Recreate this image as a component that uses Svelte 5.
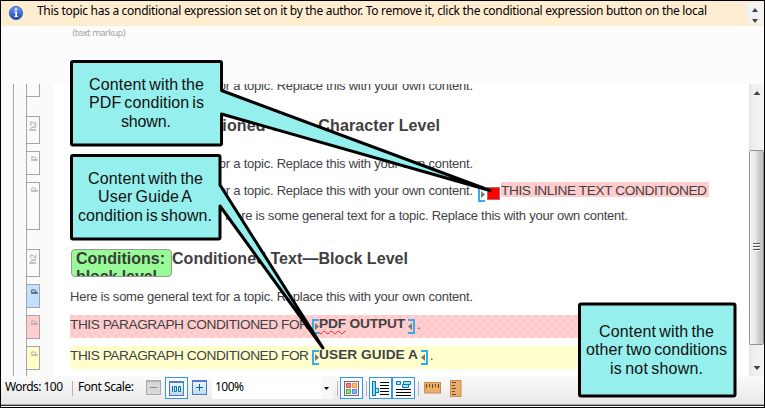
<script>
  const sentence = 'Here is some general text for a topic. Replace this with your own content.';

  // Spreads the letters of a run so that it occupies the given width.
  function fit(node, width) {
    const natural = node.getBoundingClientRect().width;
    const gaps = Math.max(1, node.textContent.length - 1);
    node.style.letterSpacing = `${(width - natural) / gaps}px`;
    node.style.width = `${width}px`;
  }

  const tags = [
    { label: '', height: 13, kind: 'first' },
    { label: 'h2', height: 28, kind: 'h' },
    { label: 'p', height: 24, kind: 'near' },
    { label: 'p', height: 48, kind: 'near' },
    { label: 'h2', height: 28, kind: 'far' },
    { label: 'p', height: 24, kind: 'near blue' },
    { label: 'p', height: 24, kind: 'near red' },
    { label: 'p', height: 24, kind: 'near yellow' }
  ];

  const callouts = [
    {
      path: 'M73 61.5H220Q221.500 61.5 221.500 63V90.500L490 190.500L221.500 114V143.500Q221.500 145 220 145H73Q71.500 145 71.500 143.500V63Q71.500 61.5 73 61.5Z',
      lines: [['Content with the', 89, 90, 115], ['PDF condition is', 89, 108, 115], ['shown.', 121, 127, 50]]
    },
    {
      path: 'M73 155.500H218.500Q220 155.500 220 157V185L323 348L220 206V237.500Q220 239 218.500 239H73Q71.500 239 71.500 237.500V157Q71.500 155.500 73 155.500Z',
      lines: [['Content with the', 88, 184, 115], ['User Guide A', 98, 202, 94], ['condition is shown.', 78, 221, 134]]
    },
    {
      path: 'M581 304H733.500Q735 304 735 305.500V394.500Q735 396 733.500 396H581Q579.500 396 579.500 394.500V305.500Q579.500 304 581 304Z',
      lines: [['Content with the', 599, 337, 115], ['other two conditions', 586, 355, 141], ['is not shown.', 610, 374, 93]]
    }
  ];
</script>

{#snippet bracket(side)}
  <svg class="bracket {side}" width="8" height="15" viewBox="0 0 8 15">
    <path d="M7 1H1V14H7" fill="none" stroke="#35adec" stroke-width="2" />
    <path d="M3 4L7 7.500L3 11Z" fill="#777" />
  </svg>
{/snippet}

<div class="window">
  <header class="notice">
    <svg class="info" width="16" height="16" viewBox="0 0 16 16">
      <defs>
        <linearGradient id="infoFill" x1="0" y1="0" x2="0" y2="1">
          <stop offset="0" stop-color="#6f9ae8" /><stop offset="1" stop-color="#1c43b4" />
        </linearGradient>
      </defs>
      <circle cx="8" cy="8" r="6.700" fill="url(#infoFill)" stroke="#3d62c4" stroke-width=".8" />
      <circle cx="8" cy="4.400" r="1.200" fill="#fff" />
      <path d="M6.300 6.500H9V11H10V12H6.300V11H7.300V7.500H6.300Z" fill="#fff" />
    </svg>
    <span class="ui notice-text" use:fit={670}>This topic has a conditional expression set on it by the author. To remove it, click the conditional expression button on the local</span>
    <svg class="spinner" width="16" height="21" viewBox="0 0 16 21">
      <rect width="16" height="21" fill="#f3f3f3" />
      <path d="M5 9L8 5L11 9Z M5 16L8 20L11 16Z" fill="#444" />
    </svg>
  </header>

  <div class="markup"><span use:fit={54}>(text markup)</span></div>

  <main class="editor">
    <aside class="gutter">
      <div class="structure">
        {#each tags as tag}
          <div class="tag {tag.kind}" style:height="{tag.height}px"><span>{tag.label}</span></div>
        {/each}
      </div>
    </aside>

    <section class="doc">
      <p class="row cut"><span use:fit={403}>{sentence}</span></p>
      <h2 class="character"><span use:fit={269}>Conditioned Text—Character Level</span></h2>
      <p class="row gap18"><span use:fit={403}>{sentence}</span></p>
      <p class="row gap7">
        <span use:fit={403}>{sentence}</span>
        <span class="inline-mark">{@render bracket('open')}<i class="swatch"></i></span>
        <span class="pink"><span class="caps" use:fit={206}>THIS INLINE TEXT CONDITIONED</span></span>
      </p>
      <p class="row gap5 list-item"><span use:fit={403}>{sentence}</span></p>
      <div class="block-heading">
        <div class="badge"><span use:fit={89}>Conditions:</span><span use:fit={81}>block level</span></div>
        <h2><span use:fit={236}>Conditioned Text—Block Level</span></h2>
      </div>
      <p class="row gap10"><span use:fit={403}>{sentence}</span></p>
      <div class="band redband">
        <span class="caps" use:fit={239}>THIS PARAGRAPH CONDITIONED FOR</span>
        {@render bracket('open')}
        <b class="strong" use:fit={86}><u>PDF</u> OUTPUT</b>
        {@render bracket('close')}
        <span class="dot">.</span>
      </div>
      <div class="band yellowband">
        <span class="caps" use:fit={239}>THIS PARAGRAPH CONDITIONED FOR</span>
        {@render bracket('open')}
        <b class="strong" use:fit={99}>USER GUIDE A</b>
        {@render bracket('close')}
        <span class="dot">.</span>
      </div>
    </section>

    <svg class="scroll" width="15" height="292" viewBox="0 0 15 292">
      <defs>
        <linearGradient id="thumb"><stop offset="0" stop-color="#f6f6f6" /><stop offset=".45" stop-color="#e6e6e8" /><stop offset=".6" stop-color="#d2d2d5" /><stop offset="1" stop-color="#bcbcc0" /></linearGradient>
        <linearGradient id="track"><stop offset="0" stop-color="#e4e4e4" /><stop offset=".3" stop-color="#f0f0f0" /><stop offset="1" stop-color="#f3f3f3" /></linearGradient>
      </defs>
      <rect width="15" height="292" fill="url(#track)" />
      <path d="M4.500 11L8 7L11.500 11Z M4.500 282L8 286L11.500 282Z" fill="#444" />
      <rect x=".5" y="66.500" width="14" height="194" rx="1" fill="url(#thumb)" stroke="#929295" />
      <path d="M4 159.500H11M4 162.500H11M4 165.500H11" stroke="#555" />
      <path d="M4 160.500H11M4 163.500H11M4 166.500H11" stroke="#fff" />
    </svg>
  </main>

  <footer class="status">
    <span class="ui words" use:fit={58}>Words: 100</span>
    <i class="sep s1"></i>
    <span class="ui scale" use:fit={56}>Font Scale:</span>
    <svg class="minus" width="15" height="15" viewBox="0 0 15 15">
      <rect x=".5" y=".5" width="14" height="14" fill="#d8d8d8" stroke="#aaa" /><path d="M1 1.500H14" stroke="#b4b4b4" /><path d="M4 7.500H11" stroke="#888" />
    </svg>
    <span class="toggle t1">
      <svg width="15" height="15" viewBox="0 0 15 15">
        <defs><linearGradient id="blueBtn" x1="0" y1="0" x2="0" y2="1"><stop offset="0" stop-color="#f1f8fd" /><stop offset="1" stop-color="#b9d9ee" /></linearGradient></defs>
        <rect x=".5" y=".5" width="14" height="14" fill="url(#blueBtn)" stroke="#5574bd" /><path d="M0 1H15" stroke="#5478d8" stroke-width="2" />
        <path d="M3.500 5V11M5.500 5.500H7.500V10.500H5.500ZM9.500 5.500H11.500V10.500H9.500Z" fill="none" stroke="#087a9d" />
      </svg>
    </span>
    <svg class="plus" width="15" height="15" viewBox="0 0 15 15">
      <rect x=".5" y=".5" width="14" height="14" fill="url(#blueBtn)" stroke="#5574bd" /><path d="M0 1H15" stroke="#5478d8" stroke-width="2" /><path d="M4 7.500H11M7.500 4V11" stroke="#086b96" />
    </svg>
    <div class="combo"><span class="ui" use:fit={29}>100%</span><i class="drop"><svg width="5" height="3" viewBox="0 0 5 3"><path d="M0 0H5L2.500 3Z" /></svg></i></div>
    <i class="sep s2"></i>
    <span class="toggle t2">
      <svg width="15" height="15" viewBox="0 0 15 15">
        <rect x=".5" y=".5" width="14" height="14" fill="#f5f5f5" stroke="#6b6e78" />
        <rect x="2" y="2" width="5" height="5" fill="#e2504f" /><rect x="3" y="3" width="3" height="3" fill="#f28080" />
        <rect x="8" y="2" width="5" height="5" fill="#ee9b40" /><rect x="9" y="3" width="3" height="3" fill="#fcc07a" />
        <rect x="2" y="8" width="5" height="5" fill="#54b446" /><rect x="3" y="9" width="3" height="3" fill="#8bdc7a" />
        <rect x="8" y="8" width="5" height="5" fill="#6085e2" /><rect x="9" y="9" width="3" height="3" fill="#8eadf8" />
      </svg>
    </span>
    <i class="sep s3"></i>
    <span class="toggle t3">
      <svg width="19" height="17" viewBox="0 0 19 17">
        <rect x="1.500" y="1.500" width="3" height="14" fill="#87d8f7" stroke="#0878b5" /><rect x="4.500" y="8.500" width="3" height="4" fill="#a9e4fa" stroke="#0878b5" />
        <path d="M9 2.500H18M9 5.500H18M9 8.500H18M9 11.500H18M9 14.500H18" stroke="#000" />
      </svg>
    </span>
    <span class="toggle t4">
      <svg width="17" height="17" viewBox="0 0 17 17">
        <path d="M1.500 1.500H5.500V4.500H1.500ZM8.500 1.500H15.500V4.500H8.500ZM7.500 4.500H13.500V7.500H7.500Z" fill="#a3e2fa" stroke="#0878b5" />
        <path d="M1 9.500H16M1 12.500H16M1 15.500H16" stroke="#000" />
      </svg>
    </span>
    <i class="sep s4"></i>
    <svg class="ruler" width="17" height="12" viewBox="0 0 17 12">
      <rect x=".5" y=".5" width="16" height="10.500" fill="#e8ae6e" stroke="#d18d4b" /><path d="M2.500 2V6M5.500 2V5M8.500 2V6M11.500 2V5M14.500 2V6" stroke="#72431c" />
    </svg>
    <svg class="vruler" width="12" height="17" viewBox="0 0 12 17">
      <rect x=".5" y=".5" width="10.500" height="16" fill="#e8ae6e" stroke="#d18d4b" /><path d="M2 2.500H6M2 5.500H5M2 8.500H6M2 11.500H5M2 14.500H6" stroke="#72431c" />
    </svg>
  </footer>

  <svg class="callouts" width="765" height="408" viewBox="0 0 765 408">
    {#each callouts as callout}
      <path d={callout.path} fill="#95efec" stroke="#000" stroke-width="3" stroke-linejoin="round" />
      {#each callout.lines as [label, x, y, width]}
        <text {x} {y} textLength={width}>{label}</text>
      {/each}
    {/each}
  </svg>
</div>

<style>
  .window { position: relative; box-sizing: border-box; width: 765px; height: 408px; border: 1px solid #000; display: flex; flex-direction: column; overflow: hidden; background: #fcfcfc; font-family: "Liberation Sans", Arial, sans-serif; }
  svg { display: block; flex: none; }
  span, b { display: inline-block; white-space: pre; flex: none; }
  p, h2 { margin: 0; }
  .ui { font: 12px/16px "Noto Sans", "Open Sans", sans-serif; color: #000; }
  .notice { height: 25px; flex: none; display: flex; background: #ffedd2; }
  .info { margin: 4px 0 0 7px; }
  .notice-text { margin: 2px 0 0 13px; }
  .spinner { margin: 2px 0 0 40px; }
  .markup { height: 58px; flex: none; padding-left: 71px; box-sizing: border-box; font: 9px/14px "DejaVu Sans", sans-serif; color: #a5a5a5; }
  .editor { height: 292px; flex: none; display: flex; background: #fff; }
  .gutter { width: 52px; box-sizing: border-box; padding-left: 12px; background: #fafafa; flex: none; }
  .structure { height: 100%; box-sizing: border-box; border-left: 1px solid #a5a5a5; padding-left: 12px; background: linear-gradient(90deg, transparent 12px, #a5a5a5 12px 13px, transparent 13px); }
  .tag { box-sizing: border-box; width: 14px; border: 1px solid #a5a5a5; background: #fafafa; font-size: 9px; line-height: 11px; color: #a0a0a0; margin-bottom: 7px; display: flex; justify-content: center; }
  .tag span { writing-mode: vertical-rl; transform: rotate(180deg); height: max-content; margin-top: 4px; }
  .tag.first { border-top: 0; margin-bottom: 19px; }
  .tag.far { margin-top: 19px; }
  .tag.blue { background: #c2e0ff; color: #222; }
  .tag.red { background: #ffcdcd; }
  .tag.yellow { background: #ffffc8; }
  .doc { width: 679px; margin-left: 17px; overflow: hidden; color: #424246; flex: none; }
  .row { height: 20px; display: flex; font-size: 13px; line-height: 20px; }
  .cut { margin-top: -8px; }
  h2 { font-size: 16px; line-height: 20px; height: 20px; font-weight: bold; color: #404040; }
  .character { margin: 20px 0 0 101px; }
  .gap18 { margin-top: 18px; }
  .gap7 { margin-top: 7px; }
  .gap5 { margin-top: 5px; }
  .gap10 { margin-top: 10px; }
  .list-item { padding-left: 155px; }
  .inline-mark { display: flex; margin-left: 2px; height: 20px; }
  .inline-mark :global(svg) { margin-top: 6px; }
  .swatch { box-sizing: border-box; width: 13px; height: 13px; background: #f00; border: 1px solid #b66; margin: 6px 0 0 1px; }
  .pink { height: 15px; margin: 1px 0 0 1px; line-height: 18px; width: 208px; background: repeating-conic-gradient(#ffd1d1 0 25%, #ffc7c7 0 50%) 0 0 / 8px 8px; }
  .caps { font-size: 13.7px; }
  .block-heading { display: flex; height: 28px; margin-top: 23px; padding-left: 1px; }
  .badge { box-sizing: border-box; width: 101px; height: 28px; border: 1px solid #999; border-radius: 4px; background: #98fb98; padding-left: 4px; overflow: hidden; font-size: 16px; font-weight: bold; line-height: 18px; color: #363e36; }
  .badge span { display: block; width: max-content; }
  .band { height: 23px; margin-top: 8px; display: flex; line-height: 20px; width: 660px; }
  .redband { background: repeating-conic-gradient(#ffd1d1 0 25%, #ffc7c7 0 50%) 0 0 / 8px 8px; }
  .yellowband { background: repeating-conic-gradient(#ffffd2 0 25%, #ffffc6 0 50%) 0 0 / 8px 8px; }
  .bracket { margin: 4px 0 0 3px; }
  .close { transform: scaleX(-1); margin-left: 2px; }
  .strong { font-size: 13.7px; line-height: 18px; margin-left: -1px; }
  .strong u { text-decoration: underline wavy #f22 1px; text-underline-offset: 2px; text-decoration-skip-ink: none; }
  .dot { font-size: 12px; margin-left: 2px; }
  .status { height: 30px; display: flex; flex: none; background: linear-gradient(#fbfbfb, #e8e8e8 28px, #666 29px); border-bottom: 1px solid #333; box-sizing: border-box; }
  .words { margin: 3px 0 0 4px; }
  .scale { margin: 3px 0 0 5px; }
  .sep { width: 1px; height: 15px; margin-top: 5px; background: #b5b5b5; flex: none; }
  .s1 { margin-left: 9px; }
  .minus { margin: 4px 0 0 12px; }
  .toggle { width: 23px; height: 22px; box-sizing: border-box; border: 1px solid #3295f4; margin-top: 1px; display: flex; align-items: center; justify-content: center; background: #f9fbfd; }
  .t1 { margin-left: 4px; }
  .plus { margin: 4px 0 0 4px; }
  .combo { width: 121px; height: 22px; margin: 1px 0 0 5px; background: #fff; display: flex; justify-content: space-between; padding-left: 3px; box-sizing: border-box; flex: none; }
  .combo .ui { margin-top: 2px; }
  .drop { width: 12px; background: #f8f8f8; padding: 10px 0 0 3px; box-sizing: border-box; }
  .s2 { margin-left: 4px; }
  .t2 { margin-left: 2px; }
  .s3 { margin-left: 3px; }
  .t3 { margin-left: 2px; }
  .s4 { margin-left: 3px; }
  .ruler { margin: 6px 0 0 5px; }
  .vruler { margin: 4px 0 0 9px; }
  .callouts { position: absolute; left: -1px; top: -1px; pointer-events: none; }
  .callouts text { font-size: 16px; word-spacing: -1.500px; fill: #111; }
</style>
